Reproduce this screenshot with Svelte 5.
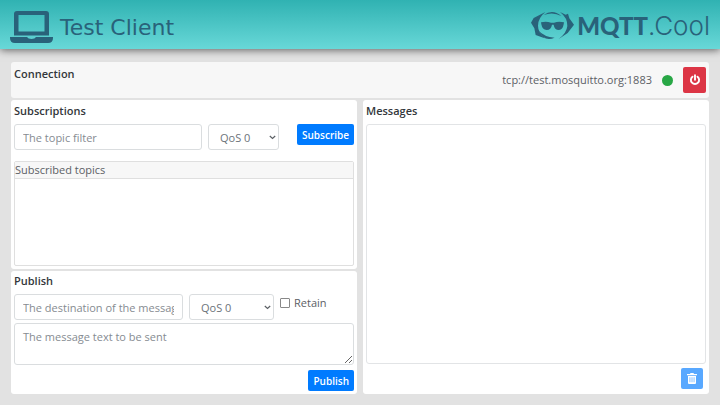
<script>
  let filter = $state('');
  let subQos = $state('0');
  let destination = $state('');
  let pubQos = $state('0');
  let retain = $state(false);
  let message = $state('');
</script>

<div class="page">
  <header>
    <div class="title">
      <svg width="43" height="33" viewBox="0 0 43 33" aria-hidden="true">
        <path fill-rule="evenodd" d="M7 0h29q3 0 3 3v21.500H4V3Q4 0 7 0ZM8.500 4v16.500h26V4Z" />
        <path d="M0 26h17q1 2 4.500 2t4.500-2h17v1q0 5-5 5H5q-5 0-5-5Z" />
      </svg>
      <h1>Test Client</h1>
    </div>
    <div class="brand">
      <svg width="43" height="29" viewBox="32 35 129 87" aria-hidden="true">
        <path d="M75 38 40 56 32 70l10 17 4 20 27 10Q53 99 53 79q0-23 22-41Z" />
        <path d="M119 38l17 8 7-3 4 14 14 19-19 25-27 18q24-18 26-39 1-24-22-42Z" />
        <path d="M70 47q27-19 53 3-25-14-53-3ZM55 94q16 18 48 21-32 14-48-21Z" />
        <path d="M62 69q16-4 30 1h9q14-5 30-1l-1 6q-3 17-14 17-14 0-16-16h-5q-3 16-16 16-13 0-16-17Z" />
      </svg>
      <span class="name"><b>MQTT</b><i>.Cool</i></span>
    </div>
  </header>

  <main>
    <section class="card connection">
      <h2>Connection</h2>
      <div class="status">
        <span>tcp://test.mosquitto.org:1883</span>
        <span class="dot"></span>
        <button class="power" aria-label="Disconnect">
          <svg width="12" height="12" viewBox="0 0 12 12" aria-hidden="true">
            <path d="M3.500 2.700a4.100 4.100 0 1 0 5 0M6 1.200v4.600" fill="none" stroke="#fff" stroke-width="1.900" stroke-linecap="round" />
          </svg>
        </button>
      </div>
    </section>

    <div class="columns">
      <div class="left">
        <section class="card subscriptions">
          <h2>Subscriptions</h2>
          <div class="row">
            <input class="field" type="text" aria-label="Topic filter" placeholder="The topic filter" bind:value={filter} />
            <span class="select sub-qos">
              <select class="field" aria-label="Subscription QoS" bind:value={subQos}>
                <option value="0">QoS 0</option>
                <option value="1">QoS 1</option>
                <option value="2">QoS 2</option>
              </select>
              <svg width="7" height="5" viewBox="0 0 7 5" aria-hidden="true"><path d="M.8 1l2.700 2.500L6.200 1" /></svg>
            </span>
            <button class="action end">Subscribe</button>
          </div>
          <div class="topics">
            <h3>Subscribed topics</h3>
          </div>
        </section>

        <section class="card publish">
          <h2>Publish</h2>
          <div class="row">
            <input class="field" type="text" aria-label="Destination" placeholder="The destination of the message" bind:value={destination} />
            <span class="select pub-qos">
              <select class="field" aria-label="Publish QoS" bind:value={pubQos}>
                <option value="0">QoS 0</option>
                <option value="1">QoS 1</option>
                <option value="2">QoS 2</option>
              </select>
              <svg width="7" height="5" viewBox="0 0 7 5" aria-hidden="true"><path d="M.8 1l2.700 2.500L6.200 1" /></svg>
            </span>
            <label class="retain"><input type="checkbox" bind:checked={retain} />Retain</label>
          </div>
          <textarea class="field" aria-label="Message" placeholder="The message text to be sent" bind:value={message}></textarea>
          <button class="action">Publish</button>
        </section>
      </div>

      <section class="card messages">
        <h2>Messages</h2>
        <div class="log"></div>
        <button class="action clear" aria-label="Clear messages" disabled>
          <svg width="10" height="11" viewBox="0 0 10 11" aria-hidden="true">
            <path fill="#fff" fill-rule="evenodd" d="M0 1h3l.5-1h3L7 1h3v1.300H0ZM1 3h8v7q0 1-1 1H2q-1 0-1-1ZM2.600 4.300v5h.7v-5ZM4.650 4.300v5h.7v-5ZM6.700 4.300v5h.7v-5Z" />
          </svg>
        </button>
      </section>
    </div>
  </main>
</div>

<style>
  :global(body) {
    background: #e2e2e2;
  }
  .page {
    box-sizing: border-box;
    min-height: 100vh;
    display: flex;
    flex-direction: column;
    font: 11px/16px "Open Sans", "Noto Sans", sans-serif;
    color: #5c6065;
  }
  .page * {
    box-sizing: border-box;
  }
  header {
    height: 49px;
    padding: 0 10px;
    display: flex;
    justify-content: space-between;
    align-items: center;
    background: linear-gradient(#30b2b2, #68d8d8);
    box-shadow: 0 1px 8px rgb(0 0 0 / 60%);
    color: #29627a;
  }
  header svg {
    fill: currentColor;
  }
  .title,
  .brand {
    display: flex;
    align-items: center;
  }
  .title {
    gap: 7px;
    padding-top: 6px;
  }
  h1 {
    margin: 0;
    font: 22px/24px "DejaVu Sans", sans-serif;
  }
  .brand {
    gap: 3px;
    padding-top: 2px;
  }
  .name {
    display: flex;
    align-items: baseline;
    font: 24px/30px Lato, sans-serif;
  }
  .name b {
    font-weight: 900;
  }
  .name i {
    font: 300 26px/30px Inter, sans-serif;
  }
  main {
    flex: 1;
    display: flex;
    flex-direction: column;
    gap: 2px;
    padding: 13px 11px 11px;
  }
  h2 {
    margin: 0;
    font-size: 11px;
    line-height: 16px;
    font-weight: 600;
    color: #33373b;
  }
  .card {
    background: #fff;
    border-radius: 3px;
    padding: 3px;
    display: flex;
    flex-direction: column;
  }
  .connection {
    flex-direction: row;
    justify-content: space-between;
    background: #f7f7f7;
    padding: 4px 3px;
  }
  .status {
    display: flex;
    align-items: center;
    gap: 10px;
    padding: 1px 0;
  }
  .dot {
    width: 11px;
    height: 11px;
    border-radius: 50%;
    background: #28a745;
  }
  button {
    border: 0;
    border-radius: 2px;
    padding: 0;
    display: flex;
    align-items: center;
    justify-content: center;
    color: #fff;
    font: inherit;
  }
  .power {
    width: 23px;
    height: 26px;
    background: #dc3545;
  }
  .columns {
    flex: 1;
    display: grid;
    grid-template-columns: minmax(0, 1fr) minmax(0, 1fr);
    gap: 6px;
  }
  .left {
    display: flex;
    flex-direction: column;
    gap: 2px;
  }
  .subscriptions {
    flex: 1;
  }
  .row {
    display: flex;
    gap: 6px;
    margin-top: 5px;
  }
  .field {
    height: 26px;
    min-width: 0;
    margin: 0;
    padding: 2px 8px 0;
    border: 1px solid #dadddf;
    border-radius: 3px;
    background: #fff;
    color: #6c737a;
    font: inherit;
    outline: 0;
  }
  .row > .field {
    flex: 1 1 0;
    padding-top: 1px;
  }
  .field::placeholder {
    color: #868b91;
    opacity: 1;
  }
  .select {
    position: relative;
    flex: none;
  }
  .sub-qos {
    width: 71px;
  }
  .pub-qos {
    width: 85px;
  }
  .select .field {
    width: 100%;
    padding-left: 11px;
    appearance: none;
  }
  .select svg {
    position: absolute;
    right: 3px;
    top: 11px;
    fill: none;
    stroke: #5c6065;
    stroke-width: 1.2;
    pointer-events: none;
  }
  .action {
    align-self: flex-end;
    height: 21px;
    padding: 0 5px;
    background: #007bff;
    font-size: 10px;
    font-weight: 600;
  }
  .action.end {
    align-self: flex-start;
    margin-left: 12px;
  }
  .topics {
    flex: 1;
    margin-top: 11px;
    border: 1px solid #dfdfdf;
    border-radius: 2px;
  }
  h3 {
    margin: 0;
    font-size: 11px;
    line-height: 16px;
    font-weight: 400;
    background: #f7f7f7;
    border-bottom: 1px solid #dfdfdf;
  }
  .publish {
    padding-top: 2px;
  }
  .retain {
    display: flex;
    width: 74px;
    height: 18px;
    align-items: center;
    gap: 4px;
  }
  .retain input {
    appearance: none;
    width: 10px;
    height: 10px;
    margin: 0;
    border: 1px solid #888;
    border-radius: 1px;
  }
  .retain input:checked {
    background: #007bff;
  }
  textarea.field {
    width: 100%;
    height: 42px;
    margin: 3px 0 5px;
    padding-top: 5px;
    resize: vertical;
  }
  .log {
    flex: 1;
    margin: 5px 0 4px;
    border: 1px solid #e2e4e6;
    border-radius: 3px;
  }
  .messages {
    padding-bottom: 5px;
  }
  .clear {
    width: 22px;
    margin-right: 3px;
    padding: 0;
    opacity: 0.65;
  }
</style>
